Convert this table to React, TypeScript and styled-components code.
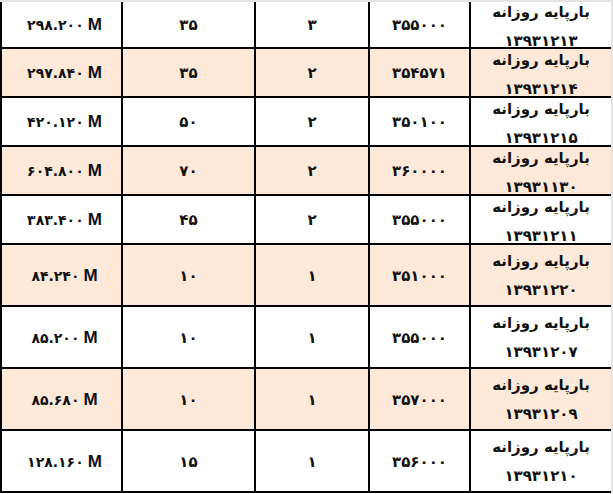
import React from 'react'
import styled, { createGlobalStyle } from 'styled-components'

const GlobalStyle = createGlobalStyle`
  html, body {
    margin: 0;
    padding: 0;
    background: #ffffff;
  }
  body {
    font-family: 'DejaVu Sans', sans-serif;
    color: #111111;
  }
`

type Entry = {
  title: string
  date: string
  price: string
  count: string
  days: string
  total: string
}

const rows: Entry[] = [
  { title: 'بارپایه روزانه', date: '۱۳۹۳۱۲۱۳', price: '۳۵۵۰۰۰', count: '۳', days: '۳۵', total: '۲۹۸.۲۰۰' },
  { title: 'بارپایه روزانه', date: '۱۳۹۳۱۲۱۴', price: '۳۵۴۵۷۱', count: '۲', days: '۳۵', total: '۲۹۷.۸۴۰' },
  { title: 'بارپایه روزانه', date: '۱۳۹۳۱۲۱۵', price: '۳۵۰۱۰۰', count: '۲', days: '۵۰', total: '۴۲۰.۱۲۰' },
  { title: 'بارپایه روزانه', date: '۱۳۹۳۱۱۳۰', price: '۳۶۰۰۰۰', count: '۲', days: '۷۰', total: '۶۰۴.۸۰۰' },
  { title: 'بارپایه روزانه', date: '۱۳۹۳۱۲۱۱', price: '۳۵۵۰۰۰', count: '۲', days: '۴۵', total: '۳۸۳.۴۰۰' },
  { title: 'بارپایه روزانه', date: '۱۳۹۳۱۲۲۰', price: '۳۵۱۰۰۰', count: '۱', days: '۱۰', total: '۸۴.۲۴۰' },
  { title: 'بارپایه روزانه', date: '۱۳۹۳۱۲۰۷', price: '۳۵۵۰۰۰', count: '۱', days: '۱۰', total: '۸۵.۲۰۰' },
  { title: 'بارپایه روزانه', date: '۱۳۹۳۱۲۰۹', price: '۳۵۷۰۰۰', count: '۱', days: '۱۰', total: '۸۵.۶۸۰' },
  { title: 'بارپایه روزانه', date: '۱۳۹۳۱۲۱۰', price: '۳۵۶۰۰۰', count: '۱', days: '۱۵', total: '۱۲۸.۱۶۰' },
]

// row heights include the 2px bottom rule; first row sits under the grey top edge
const heightFor = (i: number) => (i === 0 ? 47 : i < 5 ? 49 : 62)

const App: React.FC = () => {
  return (
    <>
      <GlobalStyle />
      <Sheet>
        {rows.map((r, i) => (
          <Row key={i} $height={heightFor(i)} $shaded={i % 2 === 1}>
            <TitleCell $short={i < 5}>
              <TitleLine>{r.title}</TitleLine>
              <TitleLine>{r.date}</TitleLine>
            </TitleCell>
            <Cell>{r.price}</Cell>
            <Cell>{r.count}</Cell>
            <Cell>{r.days}</Cell>
            <TotalCell>
              <span>{r.total}</span>
              <Unit>M</Unit>
            </TotalCell>
          </Row>
        ))}
      </Sheet>
    </>
  )
}

const Sheet = styled.div`
  width: 611px;
  direction: rtl;
  border-top: 2px solid #e4e4e4;
  border-right: 2px solid #e4e4e4;
  background: #ffffff;
`

const Row = styled.div<{ $height: number; $shaded: boolean }>`
  display: grid;
  grid-template-columns: 142px 101px 114px 133px 121px;
  grid-template-rows: 100%;
  box-sizing: border-box;
  height: ${(props) => props.$height}px;
  background: ${(props) => (props.$shaded ? '#fde9d9' : '#ffffff')};
  border-bottom: 2px solid #000000;
`

const Cell = styled.div`
  display: flex;
  align-items: center;
  justify-content: center;
  box-sizing: border-box;
  min-height: 0;
  border-left: 2px solid #000000;
  font-size: 15px;
  font-weight: 700;
  padding-top: 1px;
`

const TitleCell = styled(Cell)<{ $short: boolean }>`
  flex-direction: column;
  padding-top: ${(props) => (props.$short ? 4 : 2)}px;
`

const TitleLine = styled.div`
  flex: none;
  font-size: 15px;
  line-height: 29px;
  white-space: nowrap;
`

const TotalCell = styled(Cell)`
  direction: ltr;
  gap: 4px;
  padding-left: 6px;
  font-size: 14px;
`

const Unit = styled.span`
  font-family: 'Liberation Sans', Arial, sans-serif;
  font-size: 17px;
  font-weight: 700;
`

export default App
